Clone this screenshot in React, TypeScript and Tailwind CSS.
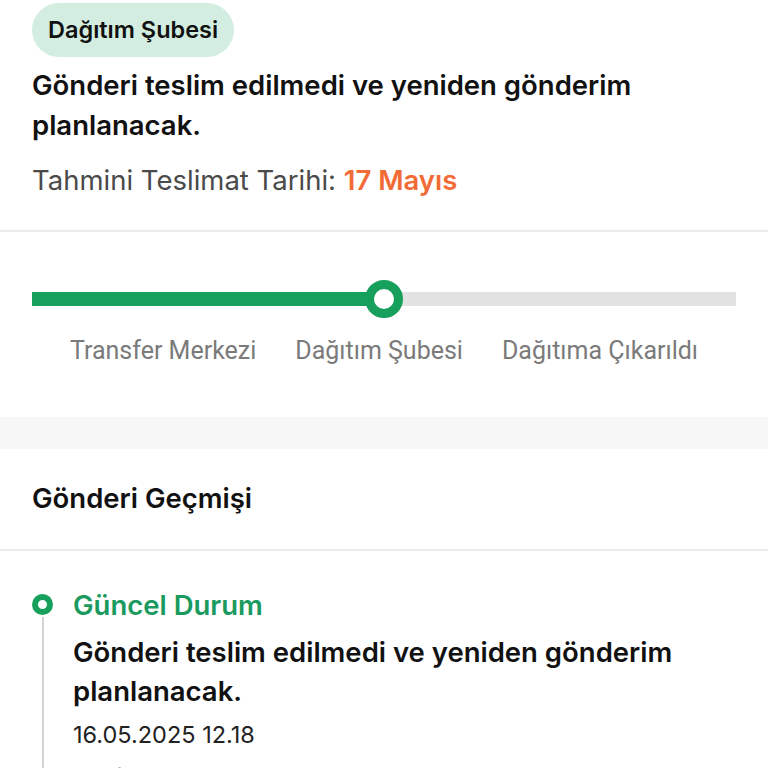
export default function App() {
  const progress = 50;

  return (
    <div className="w-[768px] h-[768px] overflow-hidden bg-white" style={{ fontFamily: "Inter, 'Noto Sans', sans-serif" }}>
      {/* Status header */}
      <div className="px-8 pt-[3px] pb-[33px]">
        <span className="inline-flex items-center h-[54px] px-4 rounded-full bg-[#d3eee0] text-[23.5px] font-semibold text-[#111]">
          Dağıtım Şubesi
        </span>
        <p className="mt-[8px] text-[27.5px] leading-[40px] font-semibold text-[#111]">
          Gönderi teslim edilmedi ve yeniden gönderim planlanacak.
        </p>
        <p className="mt-[18px] text-[27.5px] leading-[34px] text-[#4a4a4a]">
          Tahmini Teslimat Tarihi: <span className="font-semibold text-[#f26a35]">17 Mayıs</span>
        </p>
      </div>

      {/* Progress */}
      <div className="border-t-2 border-[#ececec] shadow-[0_2px_4px_rgba(0,0,0,0.08)] px-8 pt-[60px] pb-[50px]">
        <div className="relative h-[14px] bg-[#e2e2e2]">
          <div className="h-full bg-[#16a05b]" style={{ width: `${progress}%` }} />
          <div
            className="absolute top-1/2 w-[38px] h-[38px] -translate-x-1/2 -translate-y-1/2 rounded-full border-[9px] border-[#16a05b] bg-white"
            style={{ left: `${progress}%` }}
          />
        </div>
        <div
          className="flex justify-center gap-[39px] mt-[29px] text-[25px] leading-[32px] text-[#7a7a7a]"
          style={{ fontFamily: "Roboto, sans-serif" }}
        >
          <span>Transfer Merkezi</span>
          <span>Dağıtım Şubesi</span>
          <span>Dağıtıma Çıkarıldı</span>
        </div>
      </div>

      <div className="h-[32px] bg-[#f7f7f7]" />

      {/* History */}
      <div className="px-8 h-[102px] flex items-center border-b-2 border-[#ececec]">
        <h2 className="text-[27.5px] font-semibold text-[#111]">Gönderi Geçmişi</h2>
      </div>

      <div className="px-8 pt-[37px]">
        <div className="flex gap-[20px]">
          <div className="flex flex-col items-center w-[21px]">
            <div className="mt-[6px] w-[21px] h-[21px] rounded-full border-[6px] border-[#16a05b] bg-white" />
            <div className="w-[2px] h-[200px] bg-[#d4d4d4] mt-[2px]" />
          </div>
          <div className="flex-1">
            <p className="text-[27.5px] leading-[34px] font-semibold text-[#1a9a5e]">Güncel Durum</p>
            <p className="mt-[11px] text-[27.5px] leading-[39px] font-semibold text-[#111]">
              Gönderi teslim edilmedi ve yeniden gönderim planlanacak.
            </p>
            <p className="mt-[9px] text-[23.5px] leading-[30px] text-[#222]">16.05.2025 12.18</p>
            <p className="mt-[12px] text-[23.5px] leading-[30px] text-[#999]">Haziran Mah.</p>
          </div>
        </div>
      </div>
    </div>
  );
}
